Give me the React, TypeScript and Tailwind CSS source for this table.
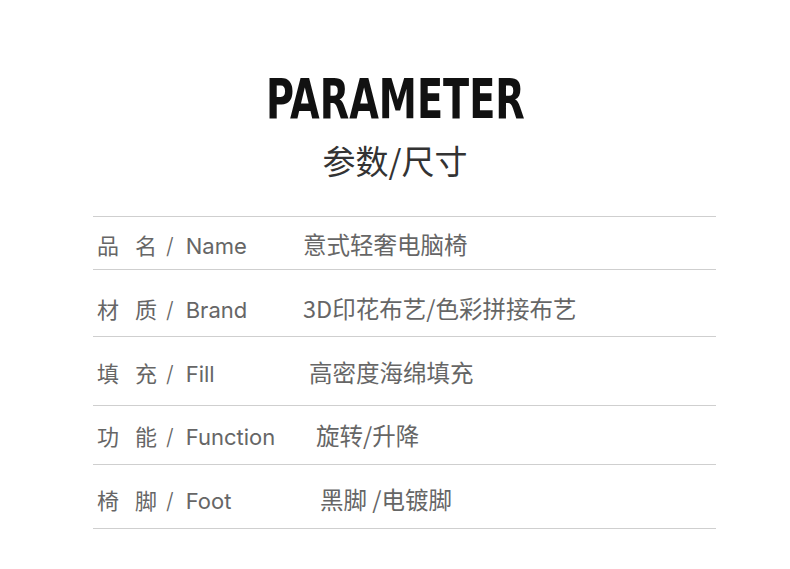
import React from 'react'

const rows = [
  { a: '品', b: '名', en: 'Name', value: '意式轻奢电脑椅', h: 'h-[53px]', pt: 'pt-[12px]', vx: 'ml-[206px]' },
  { a: '材', b: '质', en: 'Brand', value: '3D印花布艺/色彩拼接布艺', h: 'h-[67px]', pt: 'pt-[23px]', vx: 'ml-[206px]' },
  { a: '填', b: '充', en: 'Fill', value: '高密度海绵填充', h: 'h-[69px]', pt: 'pt-[20px]', vx: 'ml-[212px]' },
  { a: '功', b: '能', en: 'Function', value: '旋转/升降', h: 'h-[59px]', pt: 'pt-[14px]', vx: 'ml-[219px]' },
  { a: '椅', b: '脚', en: 'Foot', value: '黑脚 /电镀脚', h: 'h-[64px]', pt: 'pt-[19px]', vx: 'ml-[223px]' },
]

const cjk = "'Noto Sans CJK SC', sans-serif"
const latin = "Inter, 'Noto Sans CJK SC', sans-serif"

export default function App() {
  return (
    <div className="w-[790px] h-[569px] bg-white overflow-hidden">
      {/* Heading */}
      <div className="flex flex-col items-center pt-[71px]">
        <h1
          className="text-[56px] leading-none font-bold text-[#111] scale-x-[0.76]"
          style={{ fontFamily: "'DejaVu Sans Condensed', 'Liberation Sans', sans-serif" }}
        >
          PARAMETER
        </h1>
        <div
          className="mt-[11px] text-[33px] leading-[44px] text-[#333]"
          style={{ fontFamily: cjk }}
        >
          参数/尺寸
        </div>
      </div>

      {/* Table */}
      <div className="ml-[93px] w-[623px] mt-[34px] border-t border-[#cfcfcf]">
        {rows.map((r) => (
          <div
            key={r.en}
            className={`${r.h} ${r.pt} border-b border-[#cfcfcf] flex items-baseline text-[22px] leading-[30px] text-[#666]`}
            style={{ fontFamily: cjk }}
          >
            <div className="flex items-baseline pl-[4px] w-0 whitespace-pre">
              <span>{r.a}</span>
              <span className="ml-[16px]">{r.b}</span>
              <span className="ml-[9px] font-light" style={{ fontFamily: latin }}>/</span>
              <span className="ml-[12px]" style={{ fontFamily: latin }}>{r.en}</span>
            </div>
            <div className={`${r.vx} whitespace-pre text-[23.5px]`}>{r.value}</div>
          </div>
        ))}
      </div>
    </div>
  )
}
